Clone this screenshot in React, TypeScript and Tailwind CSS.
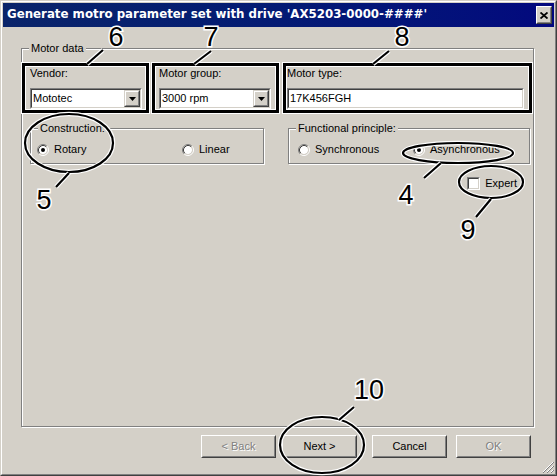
import React from "react";

type Kids = { className?: string; children?: React.ReactNode };

function Sunken({ className = "", children }: Kids) {
  return (
    <div className={`border border-t-[#808080] border-l-[#808080] border-b-white border-r-white ${className}`}>
      <div className="h-full border border-t-[#404040] border-l-[#404040] border-b-[#d4d0c8] border-r-[#d4d0c8] bg-white">
        {children}
      </div>
    </div>
  );
}

function Combo({ value }: { value: string }) {
  return (
    <Sunken className="h-[21px]">
      <div className="flex h-full items-center">
        <span className="flex-1 pl-[1px] leading-[13px]">{value}</span>
        <div className="h-[17px] w-[16px] border border-t-[#d4d0c8] border-l-[#d4d0c8] border-b-[#404040] border-r-[#404040]">
          <div className="flex h-full items-center justify-center border border-t-white border-l-white border-b-[#808080] border-r-[#808080] bg-[#d4d0c8]">
            <svg width="7" height="4" viewBox="0 0 7 4">
              <path d="M0 0h7L3.5 4z" fill="#000" />
            </svg>
          </div>
        </div>
      </div>
    </Sunken>
  );
}

function Field({ label, children, className = "" }: Kids & { label: string }) {
  return (
    <div className={`flex flex-col ${className}`}>
      <span className="leading-[13px]">{label}</span>
      <div className="mt-[8px]">{children}</div>
    </div>
  );
}

function Group({ label, className = "", children }: Kids & { label: string }) {
  return (
    <div className={`relative border border-[#808080] shadow-[inset_1px_1px_0_#fff,1px_1px_0_#fff] ${className}`}>
      <span className="absolute -top-[7px] left-[7px] bg-[#d4d0c8] px-[2px] leading-[13px]">{label}</span>
      {children}
    </div>
  );
}

function RadioDot({ checked }: { checked?: boolean }) {
  return (
    <svg width="12" height="12" viewBox="0 0 12 12" fill="none">
      <circle cx="6" cy="6" r="4" fill="#fff" />
      <path d="M2.11 9.89A5.5 5.5 0 0 1 9.89 2.11" stroke="#808080" />
      <path d="M9.89 2.11A5.5 5.5 0 0 1 2.11 9.89" stroke="#fff" />
      <path d="M2.82 9.18A4.5 4.5 0 0 1 9.18 2.82" stroke="#404040" />
      <path d="M9.18 2.82A4.5 4.5 0 0 1 2.82 9.18" stroke="#d4d0c8" />
      {checked && <circle cx="6" cy="6" r="2" fill="#000" />}
    </svg>
  );
}

function Radio({ label, checked, className = "" }: { label: string; checked?: boolean; className?: string }) {
  return (
    <div className={`flex items-center ${className}`}>
      <RadioDot checked={checked} />
      <span className="ml-[5px] leading-[13px]">{label}</span>
    </div>
  );
}

function Btn({ label, disabled, className = "" }: { label: string; disabled?: boolean; className?: string }) {
  return (
    <div className={`h-[23px] w-[75px] border border-t-white border-l-white border-b-[#404040] border-r-[#404040] ${className}`}>
      <div className="flex h-full items-center justify-center border border-t-[#d4d0c8] border-l-[#d4d0c8] border-b-[#808080] border-r-[#808080]">
        <span className={disabled ? "text-[#808080] [text-shadow:1px_1px_0_#fff]" : ""}>{label}</span>
      </div>
    </div>
  );
}

function Callouts() {
  const rects = [
    [22.5, 63.5, 124, 47],
    [152.5, 63.5, 124, 47],
    [283.5, 63.5, 246, 47],
  ];
  const lines = [
    [86, 63, 102, 49],
    [193, 63, 210, 50],
    [372, 63, 388, 50],
    [68, 172, 55, 186],
    [440, 162, 423, 177],
    [490, 198, 475, 216],
    [338, 419, 353, 406],
  ];
  const ellipses = [
    [68, 142, 44, 29],
    [457, 152, 55, 10],
    [490, 181, 32, 16],
    [321, 444, 42, 28],
  ];
  const digits: [string, number, number][] = [
    ["6", 115, 45],
    ["7", 210, 45],
    ["8", 401, 45],
    ["5", 43, 208],
    ["4", 405, 203],
    ["9", 467, 238],
    ["10", 368, 398],
  ];
  return (
    <svg className="pointer-events-none absolute inset-0" width="557" height="476" viewBox="0 0 557 476" fill="none">
      {rects.map(([x, y, w, h], i) => (
        <g key={i}>
          <rect x={x} y={y} width={w} height={h} stroke="#fff" strokeWidth="5" />
          <rect x={x} y={y} width={w} height={h} stroke="#000" strokeWidth="3" />
        </g>
      ))}
      {ellipses.map(([cx, cy, rx, ry], i) => (
        <g key={i}>
          <ellipse cx={cx} cy={cy} rx={rx} ry={ry} stroke="#fff" strokeWidth="4.5" />
          <ellipse cx={cx} cy={cy} rx={rx} ry={ry} stroke="#000" strokeWidth="2.2" />
        </g>
      ))}
      {lines.map(([x1, y1, x2, y2], i) => (
        <g key={i}>
          <line x1={x1} y1={y1} x2={x2} y2={y2} stroke="#fff" strokeWidth="4.5" />
          <line x1={x1} y1={y1} x2={x2} y2={y2} stroke="#000" strokeWidth="2.2" />
        </g>
      ))}
      {digits.map(([t, x, y]) => (
        <text
          key={t}
          x={x}
          y={y}
          textAnchor="middle"
          fontFamily="'Liberation Sans', Arial, sans-serif"
          fontSize="27"
          fill="#000"
          stroke="#fff"
          strokeWidth="3"
          paintOrder="stroke"
        >
          {t}
        </text>
      ))}
    </svg>
  );
}

export default function App() {
  return (
    <div className="relative h-[476px] w-[557px] border border-t-[#d4d0c8] border-l-[#d4d0c8] border-b-[#404040] border-r-[#404040] bg-[#d4d0c8] font-['Liberation_Sans',Arial,sans-serif] text-[11px] text-black">
      <div className="flex h-full flex-col border border-t-white border-l-white border-b-[#808080] border-r-[#808080] p-px">
        {/* title bar */}
        <div className="flex h-[24px] items-center justify-between bg-gradient-to-r from-[#0a246a] to-[#03087e] pl-[4px] pr-[2px]">
          <span className="font-['DejaVu_Sans',Verdana,sans-serif] text-[11.8px] font-bold text-white">
            Generate motro parameter set with drive 'AX5203-0000-####'
          </span>
          <div className="h-[18px] w-[16px] border border-t-white border-l-white border-b-[#404040] border-r-[#404040]">
            <div className="flex h-full items-center justify-center border border-t-[#d4d0c8] border-l-[#d4d0c8] border-b-[#808080] border-r-[#808080] bg-[#d4d0c8]">
              <svg width="8" height="7" viewBox="0 0 8 7">
                <path d="M0.5 0.5L7.5 6.5M7.5 0.5L0.5 6.5" stroke="#000" strokeWidth="1.8" />
              </svg>
            </div>
          </div>
        </div>

        <Group label="Motor data" className="ml-[18px] mr-[20px] mt-[21px] h-[379px] pl-[8px] pr-[9px] pt-[18px]">
          <div className="flex items-start">
            <Field label="Vendor:" className="w-[112px] shrink-0">
              <Combo value="Mototec" />
            </Field>
            <Field label="Motor group:" className="ml-[17px] w-[112px] shrink-0">
              <Combo value="3000 rpm" />
            </Field>
            <Field label="Motor type:" className="ml-[16px] flex-1">
              <Sunken className="h-[21px]">
                <div className="flex h-full items-center pl-[1px] leading-[13px]">17K456FGH</div>
              </Sunken>
            </Field>
          </div>

          <div className="mt-[19px] flex">
            <Group label="Construction:" className="h-[36px] w-[234px] shrink-0 pl-[6px] pt-[14px]">
              <div className="flex items-center">
                <Radio label="Rotary" checked className="w-[145px]" />
                <Radio label="Linear" />
              </div>
            </Group>
            <Group label="Functional principle:" className="ml-[24px] h-[36px] w-[242px] shrink-0 pl-[9px] pt-[14px]">
              <div className="flex items-center">
                <Radio label="Synchronous" className="w-[115px]" />
                <Radio label="Asynchronous" checked />
              </div>
            </Group>
          </div>

          <div className="mr-[7px] mt-[13px] flex items-center justify-end">
            <Sunken className="h-[13px] w-[13px]" />
            <span className="ml-[5px] leading-[13px]">Expert</span>
          </div>
        </Group>

        <div className="mr-[23px] mt-[8px] flex justify-end">
          <Btn label="< Back" disabled />
          <Btn label="Next >" className="ml-[6px]" />
          <Btn label="Cancel" className="ml-[15px]" />
          <Btn label="OK" disabled className="ml-[9px]" />
        </div>
      </div>

      {/* size grip */}
      <svg className="absolute bottom-[2px] right-[2px]" width="12" height="12" viewBox="0 0 12 12">
        <path d="M11 1L1 11M11 5L5 11M11 9L9 11" stroke="#fff" />
        <path d="M12 1L1 12M12 5L5 12M12 9L9 12" stroke="#808080" />
      </svg>

      <Callouts />
    </div>
  );
}
